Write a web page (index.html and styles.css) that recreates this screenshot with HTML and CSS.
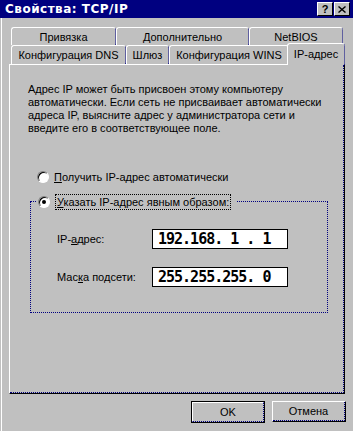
FILE: index.html
```html
<!DOCTYPE html>
<html lang="ru">

<head>
    <meta charset="UTF-8">
    <title>Свойства: TCP/IP</title>
    <link rel="stylesheet" href="styles.css">
</head>

<body>
    <div class="titlebar">
        <span class="title">Свойства: TCP/IP</span>
        <div class="title-btns">
            <span class="title-btn">?</span>
            <span class="title-btn">
                <svg width="8" height="7" viewBox="0 0 8 7">
                    <path d="M0.5 0.5 L7.5 6.5 M7.5 0.5 L0.5 6.5" stroke="#000" stroke-width="1.4" fill="none" />
                </svg>
            </span>
        </div>
    </div>

    <div class="window">
        <div class="tabs">
            <div class="tab-row">
                <div class="tab" style="width:105px">Привязка</div>
                <div class="tab" style="width:133px">Дополнительно</div>
                <div class="tab" style="width:94px">NetBIOS</div>
            </div>
            <div class="tab-row">
                <div class="tab" style="width:115px">Конфигурация DNS</div>
                <div class="tab" style="width:43px">Шлюз</div>
                <div class="tab" style="width:120px">Конфигурация WINS</div>
                <div class="tab active" style="width:58px">IP-адрес</div>
            </div>
        </div>

        <div class="panel">
            <div class="panel-inner">
                <p class="info">
                    Адрес IP может быть присвоен этому компьютеру<br>
                    автоматически. Если сеть не присваивает автоматически<br>
                    адреса IP, выясните адрес у администратора сети и<br>
                    введите его в соответствующее поле.
                </p>

                <div class="radio-row">
                    <span class="radio"></span>
                    <span><u>П</u>олучить IP-адрес автоматически</span>
                </div>

                <fieldset class="group">
                    <legend class="radio-row">
                        <span class="radio checked"></span>
                        <span class="focus"><u>У</u>казать IP-адрес явным образом:</span>
                    </legend>
                    <div class="fields">
                        <span>IP-<u>а</u>дрес:</span>
                        <div class="ip">192.168. 1 . 1</div>
                        <span>Мас<u>к</u>а подсети:</span>
                        <div class="ip">255.255.255. 0</div>
                    </div>
                </fieldset>
            </div>
        </div>

        <div class="footer">
            <div class="btn default"><span class="btn-face">OK</span></div>
            <div class="btn"><span class="btn-face">Отмена</span></div>
        </div>
    </div>
</body>

</html>
```

FILE: styles.css
```css
body {
    margin: 0;
    width: 353px;
    height: 431px;
    overflow: hidden;
    background: #c0c0c0;
    font-family: "Liberation Sans", Arial, sans-serif;
    font-size: 11px;
    color: #000;
}

.titlebar {
    height: 18px;
    background: #000080;
    color: #fff;
    display: flex;
    align-items: center;
    justify-content: space-between;
    padding: 0 3px 0 5px;
}

.title {
    font-family: "DejaVu Sans", sans-serif;
    font-weight: bold;
    font-size: 12px;
    letter-spacing: 0.5px;
}

.title-btns {
    display: flex;
    gap: 1px;
}

.title-btn {
    width: 16px;
    height: 14px;
    box-sizing: border-box;
    background: #c0c0c0;
    border-top: 1px solid #fff;
    border-left: 1px solid #fff;
    border-right: 1px solid #000;
    border-bottom: 1px solid #000;
    color: #000;
    font-weight: bold;
    font-size: 11px;
    display: flex;
    align-items: center;
    justify-content: center;
}

.window {
    height: 413px;
    margin-left: 1px;
    border-left: 1px solid #fff;
    padding: 9px 7px 0 7px;
    box-sizing: border-box;
}

.tabs {
    margin-left: 2px;
}

.tab-row {
    display: flex;
    height: 18px;
}

.tab-row + .tab-row {
    height: 19px;
}

.tab {
    box-sizing: border-box;
    border-top: 1px solid #fff;
    border-left: 1px solid #fff;
    border-right: 1px dotted #000080;
    border-radius: 3px 3px 0 0;
    display: flex;
    align-items: center;
    justify-content: center;
    white-space: nowrap;
}

.tab.active {
    position: relative;
    z-index: 1;
    background: #c0c0c0;
    margin: -2px -2px -1px -2px;
    height: 22px;
    padding-bottom: 2px;
}

.panel {
    width: 336px;
    height: 330px;
    box-sizing: border-box;
    border-top: 1px solid #fff;
    border-left: 1px solid #fff;
    border-right: 1px solid #000;
    border-bottom: 1px solid #000;
}

.panel-inner {
    height: 100%;
    box-sizing: border-box;
    border-right: 1px dotted #000080;
    border-bottom: 1px dotted #000080;
    padding: 18px 0 0 18px;
}

.info {
    margin: 0;
    line-height: 13px;
}

.radio-row {
    display: flex;
    align-items: center;
    gap: 5px;
    height: 16px;
    margin-top: 34px;
    padding-left: 9px;
}

.radio {
    width: 12px;
    height: 12px;
    box-sizing: border-box;
    border-radius: 50%;
    background: #fff;
    border: 1px solid;
    border-color: #808080 #fff #fff #808080;
    box-shadow: inset 1px 1px 0 #000;
    position: relative;
}

.radio.checked::after {
    content: "";
    position: absolute;
    left: 3px;
    top: 3px;
    width: 4px;
    height: 4px;
    border-radius: 50%;
    background: #000;
}

.group {
    margin: 8px 0 0 2px;
    padding: 0 0 0 26px;
    width: 298px;
    height: 120px;
    box-sizing: border-box;
    border: 1px dotted #000080;
}

.group legend.radio-row {
    margin: 0 0 0 -21px;
    padding: 0 6px 0 2px;
    height: 17px;
}

.focus {
    border: 1px dotted #000;
    padding: 1px 1px;
}

.fields {
    display: grid;
    grid-template-columns: 95px 136px;
    row-gap: 18px;
    align-items: center;
    padding-top: 19px;
}

.ip {
    height: 20px;
    box-sizing: border-box;
    background: #fff;
    border: 1px solid #000;
    padding-left: 5px;
    font-family: "DejaVu Sans Mono", monospace;
    font-weight: bold;
    font-size: 15px;
    letter-spacing: -1px;
    line-height: 18px;
    white-space: pre;
}

.footer {
    display: flex;
    justify-content: flex-end;
    gap: 7px;
    margin-top: 7px;
}

.btn {
    width: 74px;
    height: 21px;
    box-sizing: border-box;
    border-top: 1px solid #fff;
    border-left: 1px solid #fff;
    border-right: 1px solid #000;
    border-bottom: 1px solid #000;
    display: flex;
}

.btn.default {
    height: 22px;
    border: 1px solid #000;
}

.btn-face {
    flex: 1;
    display: flex;
    align-items: center;
    justify-content: center;
    border-right: 1px dotted #000080;
    border-bottom: 1px dotted #000080;
}

.btn.default .btn-face {
    border-top: 1px solid #fff;
    border-left: 1px solid #fff;
}
```
